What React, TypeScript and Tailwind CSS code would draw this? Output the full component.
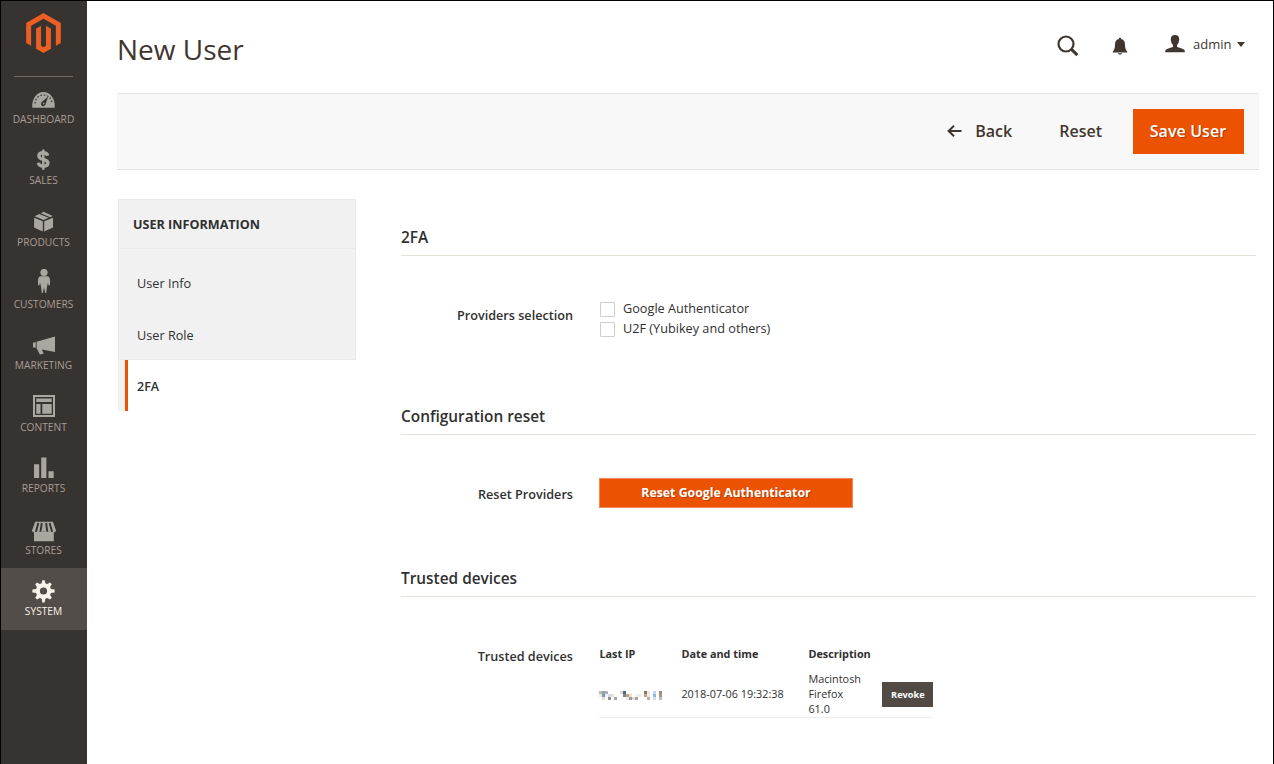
import React from "react";

type NavItem = { label: string; icon: React.ReactNode; active?: boolean };

const navItems: NavItem[] = [
  {
    label: "Dashboard",
    icon: (
      <>
        <path fill="currentColor" d="M3.3 23.8C3 20 3.6 16 5.800 13 8 9.800 11 8.100 14.500 8.100S21 9.800 23.200 13c2.200 3 2.800 7 2.500 10.800z" />
        <path fill="none" stroke="#373330" strokeWidth="1.200" strokeDasharray="1.600 1.800" d="M6 19.500C6.200 14.500 9.500 11 14.500 11s8.300 3.500 8.500 8.500" />
        <path fill="#373330" d="M19.200 12.400 16.600 20a2.300 2.300 0 1 1-3.800-1.900z" />
        <circle cx="14.600" cy="19.600" r=".8" fill="currentColor" />
      </>
    ),
  },
  {
    label: "Sales",
    icon: (
      <>
        <path fill="none" stroke="currentColor" strokeWidth="3.400" d="M18.700 9.700C18.100 7.800 16.700 6.800 14.300 6.800c-2.600 0-4.400 1-4.400 3.100 0 4.600 9 2.300 9 7.100 0 2.100-1.900 3.200-4.600 3.200-2.800 0-4.600-1.100-5-3.400" />
        <path stroke="currentColor" strokeWidth="2.400" d="M14.300 3.500v20.300" />
      </>
    ),
  },
  {
    label: "Products",
    icon: (
      <path fill="currentColor" d="m5.100 9.700 8.700 3.600v10.200l-8.700-4.100zM24 9.700v9.700l-8.800 4.100V13.300zM10.300 5.900l9.300 3.900-5 2.200-9-3.700zM14.600 3.800l9 4.300-2.500 1.100-9.300-4z" />
    ),
  },
  {
    label: "Customers",
    icon: (
      <>
        <circle cx="15" cy="3.500" r="3.600" fill="currentColor" />
        <path fill="currentColor" d="M12 7.200h6c2 0 3 2 3 4.300v4.200c0 .8-1.500 1-1.700 0l-.3-2.200-1 4.200-.8 6.300h-1L15 18.500 13.800 24h-1L12 17.700l-1-4.200-.4 2.200c-.2 1-1.600.8-1.600 0v-4.200c0-2.300 1-4.300 3-4.300z" />
      </>
    ),
  },
  {
    label: "Marketing",
    icon: (
      <path fill="currentColor" d="M26 5.500v15.500l-13-2.600 1.700 4.300-3.900.9-3.200-6.300V10.700zM6.700 10.500v6.500L6 16.400H4V11.500h2z" />
    ),
  },
  {
    label: "Content",
    icon: (
      <>
        <path fill="none" stroke="currentColor" strokeWidth="2" d="M5 4h20v20H5z" />
        <path fill="currentColor" d="M7.300 6.600h15.400v3.500H7.300zM7.300 12h4.200v9.700H7.300zM13.300 12h9.400v9.700h-9.400z" />
      </>
    ),
  },
  {
    label: "Reports",
    icon: <path fill="currentColor" d="M5 10.200h5.200V24H5zM12.200 3.500h5.200V24h-5.200zM19.500 17.200h5.200V24h-5.200z" />,
  },
  {
    label: "Stores",
    icon: (
      <>
        <path fill="currentColor" d="M5 16h19.800v9.300H5zM6.200 5.700h17.700L27 14.500c0 2.300-3.300 2.500-4 .3-.5 2-3.800 2-4 0-.5 2-3.700 2-4 0-.5 2-3.700 2-4 0-.5 2-3.800 2-4.100 0C6.200 17 3 16.600 3 14.500z" />
        <path fill="none" stroke="#373330" strokeWidth="1.900" d="M9.300 7 7 15.700M12.800 7l-1.300 8.700M17.100 7l1.200 8.700M20.600 7l2.500 8.700" />
      </>
    ),
  },
  {
    label: "System",
    active: true,
    icon: (
      <>
        <path
          fill="currentColor"
          d="m12.700 6.300.6-3.100h2.400l.6 3.100 2 .8 2.700-1.700L22.800 7.200l-1.700 2.700.8 2 3.700.7v2.800l-3.700.7-.8 2 1.700 2.700-1.800 1.800-2.700-1.700-2 .8-.6 3.900h-2.400l-.6-3.900-2-.8L8 22.600l-1.800-1.800 1.700-2.700-.8-2-3.700-.7v-2.800l3.700-.7.8-2-1.700-2.700L8 5.400l2.700 1.700z"
        />
        <circle cx="14.500" cy="14" r="3.600" fill="#524d49" />
      </>
    ),
  },
];

function MenuEntry({ label, icon, active }: NavItem) {
  return (
    <a
      className={
        active
          ? "flex h-[62px] flex-col items-center bg-[#524d49] pt-[9px] text-[#f7f3eb]"
          : "flex h-[61.6px] flex-col items-center pt-[9px] text-[#a79d95]"
      }
    >
      <svg width="30" height="26" viewBox="0 0 30 26" className={active ? "text-[#f7f3eb]" : "text-[#aaa6a0]"}>
        {icon}
      </svg>
      <span
        className={
          active
            ? "-ml-px text-[10.200px] leading-4 uppercase"
            : "-ml-px pt-[0.450px] text-[10.200px] leading-4 uppercase"
        }
      >
        {label}
      </span>
    </a>
  );
}

function Sidebar() {
  return (
    <nav className="flex w-[86px] shrink-0 flex-col bg-[#373330]">
      <div className="flex h-[74.400px] shrink-0 flex-col items-center pt-3">
        <svg width="35" height="40" viewBox="1.600 0 20.800 24" className="mr-[0.500px] shrink-0">
          <path
            fill="#eb5f25"
            d="M12 24l-4.455-2.572v-12l2.970-1.715v12.001l1.485.902 1.485-.902V7.713l2.971 1.715v12L12 24zM22.391 6v12l-2.969 1.714V7.713L12 3.430 4.574 7.713v12.001L1.609 18V6L12 0l10.391 6z"
          />
        </svg>
        <div className="mt-[23px] mr-px h-px w-[59px] shrink-0 bg-[#736963]" />
      </div>
      {navItems.map((item) => (
        <MenuEntry key={item.label} {...item} />
      ))}
    </nav>
  );
}

function Header() {
  return (
    <header className="flex h-[92px] items-start justify-between pr-[14px] text-[#41362f]">
      <h1 className="pt-[28px] text-[28px] leading-10">New User</h1>
      <div className="flex pt-[33px]">
        <svg width="22" height="22" viewBox="0 0 22 22" fill="none" stroke="currentColor" className="mt-px mr-[33px]">
          <circle cx="9" cy="9" r="7.500" strokeWidth="2.200" />
          <path d="m14.200 14.200 6.200 6" strokeWidth="3" />
        </svg>
        <svg width="16" height="18" viewBox="0 0 16 18" fill="currentColor" className="mt-[3px] mr-[37px]">
          <path d="M8 .8c.8 0 1.200.5 1.200 1.100C12 2.500 13 4.700 13 7.400c0 3.800.8 5.600 2.300 7.300v.8H.7v-.8C2.200 13 3 11.200 3 7.400c0-2.700 1-4.900 3.800-5.500C6.800 1.300 7.200.8 8 .8zM5.900 16.200h4.200c-.3.900-1 1.300-2.100 1.300s-1.800-.4-2.100-1.300z" />
        </svg>
        <svg width="20" height="18" viewBox="0 0 20 18" fill="currentColor" className="mt-px mr-2">
          <path d="M10 0c2.800 0 4.200 1.500 4.200 4.300 0 2.200-.7 4.300-2.100 5.500v2.100c3.400 1 6.400 1.700 7.400 3.100.3.600.3 1.300.3 2.300H.2c0-1 0-1.700.3-2.300 1-1.400 4-2.100 7.400-3.100V9.800C6.500 8.600 5.800 6.500 5.800 4.300 5.800 1.500 7.200 0 10 0z" />
        </svg>
        <span className="w-[38px] text-[13px] leading-5 whitespace-nowrap">admin</span>
        <svg width="8" height="5" viewBox="0 0 8 5" className="mt-[8px] ml-[6px]">
          <path fill="currentColor" d="M0 0h8L4 5z" />
        </svg>
      </div>
    </header>
  );
}

function ActionBar() {
  return (
    <div className="flex h-[77px] items-center justify-end border-y border-[#e3e3e3] bg-[#f8f8f8] pr-[15px] text-base font-semibold text-[#41362f]">
      <button className="flex items-center pb-[2px] font-semibold">
        <svg width="15" height="12" viewBox="0 0 15 12" fill="none" stroke="currentColor" strokeWidth="2" className="mt-px mr-[13px]">
          <path d="M7 .8 1.600 6 7 11.200M1.600 6H14.500" />
        </svg>
        Back
      </button>
      <button className="ml-[47px] pb-[2px] font-semibold">Reset</button>
      <button className="ml-[31px] h-[45px] w-[111px] bg-[#eb5202] pr-px pb-[2px] font-semibold tracking-[0.100px] text-white [text-shadow:1px_1px_0_rgba(0,0,0,0.25)]">
        Save User
      </button>
    </div>
  );
}

function UserTabs() {
  return (
    <aside className="w-[238px] shrink-0 text-[12.700px] text-[#303030]">
      <div className="h-[161px] border border-[#e9e9e9] bg-[#f1f1f1]">
        <h2 className="h-[49px] border-b border-[#e9e9e9] pl-[14px] text-[12.600px] leading-[50px] font-bold">USER INFORMATION</h2>
        <div className="h-[52px] pt-[9px] pl-[18px] leading-[50px]">User Info</div>
        <div className="h-[52px] pt-[9px] pl-[18px] leading-[50px]">User Role</div>
      </div>
      <div className="flex h-[51px] border-l-[7px] border-[#f1f1f1]">
        <div className="w-[3px] bg-[#eb5202]" />
        <div className="pl-[9px] text-[12.500px] leading-[54px] font-semibold">2FA</div>
      </div>
    </aside>
  );
}

function Legend({ children }: { children: React.ReactNode }) {
  return (
    <h3 className="h-[36px] border-b border-[#e3e3dc] text-[15.400px] leading-[35px] font-semibold text-[#303030]">
      {children}
    </h3>
  );
}

function FieldLabel({ children }: { children: React.ReactNode }) {
  return <div className="w-[172px] shrink-0 text-right text-[12.650px] leading-5 font-semibold">{children}</div>;
}

function Option({ label }: { label: string }) {
  return (
    <label className="flex h-5 items-center">
      <span className="mt-[2px] mr-[8px] size-[15px] rounded-[1px] border border-[#d0cdcb] bg-white" />
      <span className="text-[12.700px] leading-5">{label}</span>
    </label>
  );
}

const maskedCells: [number, number, string][] = [
  [0, 0, "#c5b5a3"], [1, 0, "#80a7ce"], [2, 0, "#b8aea6"], [0, 1, "#f4e8dc"], [1, 1, "#7799bd"], [2, 1, "#eef4fa"],
  [1, 2, "#e7ddd4"], [3, 1, "#d3dce6"], [3, 2, "#8d9096"], [4, 1, "#e7ddd6"], [5, 2, "#a7a7aa"],
  [7, 0, "#e0d5cc"], [8, 0, "#55657e"], [8, 1, "#7c8798"], [9, 1, "#bfa48a"], [10, 1, "#f2dfcb"], [9, 2, "#e9e9e9"],
  [10, 2, "#99999b"], [11, 2, "#dddcdb"], [12, 1, "#e7f2fb"], [12, 2, "#a5a5a5"], [13, 1, "#f6e9dc"],
  [15, 0, "#937454"], [15, 1, "#b7a797"], [16, 0, "#e5e9f0"], [16, 1, "#fae9d9"], [16, 2, "#b6b0aa"],
  [18, 0, "#bbdcf5"], [18, 1, "#90b9df"], [18, 2, "#dddddd"], [20, 0, "#a68c73"], [20, 1, "#a9987f"], [20, 2, "#b9bbbd"],
];

function MaskedAddress() {
  return (
    <svg width="63" height="9" viewBox="0 0 63 9" shapeRendering="crispEdges" className="mt-px -ml-[0.500px]">
      {maskedCells.map(([column, row, fill]) => (
        <rect key={`${column}-${row}`} x={column * 3} y={row * 3} width="3" height="3" fill={fill} />
      ))}
    </svg>
  );
}

function DevicesTable() {
  return (
    <div className="ml-[26.400px] w-[334px] text-[10.850px] leading-[15px]">
      <div className="grid h-[26px] grid-cols-[82px_127px_74px_51px] font-bold">
        <span>Last IP</span>
        <span>Date and time</span>
        <span>Description</span>
      </div>
      <div className="grid h-[46px] grid-cols-[82px_127px_74px_51px] items-center border-b border-[#eeeeee]">
        <MaskedAddress />
        <span className="pb-[2px]">2018-07-06 19:32:38</span>
        <span className="-mt-[2px]">
          Macintosh
          <br />
          Firefox
          <br />
          61.0
        </span>
        <button className="h-[25px] bg-[#514943] pb-px text-[9.200px] font-bold text-white">Revoke</button>
      </div>
    </div>
  );
}

export default function App() {
  return (
    <div className="flex h-[764px] w-[1274px] overflow-hidden border-t border-r border-l border-black bg-white font-['Open_Sans',sans-serif] text-[#303030]">
      <Sidebar />
      <div className="ml-[30px] w-[1142px]">
        <Header />
        <ActionBar />
        <div className="flex pt-[29px] pl-px">
          <UserTabs />
          <main className="ml-[45px] w-[855px] pt-[21px]">
            <section className="h-[179px]">
              <Legend>2FA</Legend>
              <div className="flex pt-[42px]">
                <div className="pt-[7px]">
                  <FieldLabel>Providers selection</FieldLabel>
                </div>
                <div className="ml-[27px]">
                  <Option label="Google Authenticator" />
                  <Option label="U2F (Yubikey and others)" />
                </div>
              </div>
            </section>
            <section className="h-[162px]">
              <Legend>Configuration reset</Legend>
              <div className="flex pt-[43px]">
                <div className="pt-[6px]">
                  <FieldLabel>Reset Providers</FieldLabel>
                </div>
                <button className="ml-[26px] h-[30px] w-[254px] border border-[#f08755] bg-[#eb5202] pt-px text-[12.300px] font-bold text-white [text-shadow:1px_1px_0_rgba(0,0,0,0.25)]">
                  Reset Google Authenticator
                </button>
              </div>
            </section>
            <section>
              <Legend>Trusted devices</Legend>
              <div className="flex pt-[49px]">
                <FieldLabel>Trusted devices</FieldLabel>
                <DevicesTable />
              </div>
            </section>
          </main>
        </div>
      </div>
    </div>
  );
}
